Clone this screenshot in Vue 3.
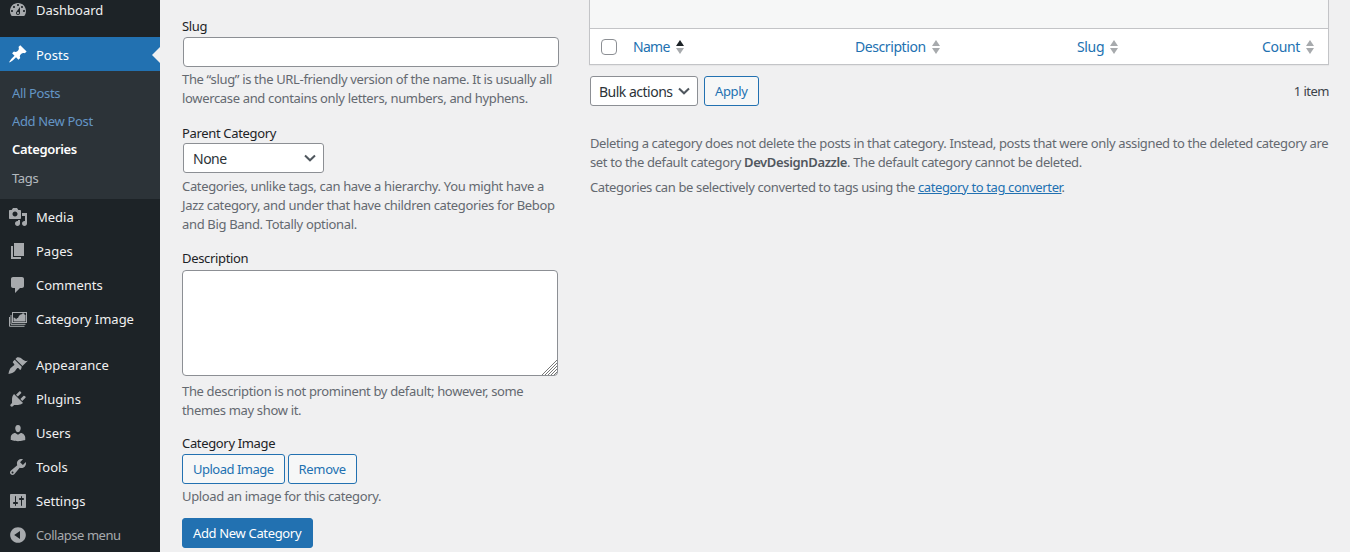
<script setup>
const ic = {
  dashboard: 'M3.76 16h12.48c1.1-1.37 1.76-3.11 1.76-5 0-4.42-3.58-8-8-8s-8 3.58-8 8c0 1.89.66 3.63 1.76 5zM10 4c.55 0 1 .45 1 1s-.45 1-1 1-1-.45-1-1 .45-1 1-1zM6 6c.55 0 1 .45 1 1s-.45 1-1 1-1-.45-1-1 .45-1 1-1zm8 0c.55 0 1 .45 1 1s-.45 1-1 1-1-.45-1-1 .45-1 1-1zm-5.37 5.55L12 7v6c0 1.1-.9 2-2 2s-2-.9-2-2c0-.57.24-1.08.63-1.45zM4 10c.55 0 1 .45 1 1s-.45 1-1 1-1-.45-1-1 .45-1 1-1zm12 0c.55 0 1 .45 1 1s-.45 1-1 1-1-.45-1-1 .45-1 1-1zm-5 3c0-.55-.45-1-1-1s-1 .45-1 1 .45 1 1 1 1-.45 1-1z',
  post: 'M10.44 3.02l1.82-1.82 6.36 6.35-1.83 1.82c-1.05-.68-2.48-.57-3.41.36l-.75.75c-.92.93-1.04 2.35-.35 3.41l-1.83 1.82-2.41-2.41-2.8 2.79c-.42.42-3.38 2.71-3.8 2.29s1.86-3.39 2.28-3.81l2.79-2.79L4.1 9.36l1.83-1.82c1.05.69 2.48.57 3.4-.36l.75-.75c.93-.92 1.05-2.35.36-3.41z',
  media: 'M13 11V4c0-.55-.45-1-1-1h-1.67L9 1H5L3.67 3H2c-.55 0-1 .45-1 1v7c0 .55.45 1 1 1h10c.55 0 1-.45 1-1zM7 4.5c1.38 0 2.5 1.12 2.5 2.5S8.38 9.5 7 9.5 4.5 8.38 4.5 7 5.62 4.5 7 4.5zM14 6h5v10.5c0 1.38-1.12 2.5-2.5 2.5S14 17.88 14 16.5s1.12-2.5 2.5-2.5c.17 0 .34.02.5.05V9h-3V6zm-4 8.05V13h2v3.5c0 1.38-1.12 2.5-2.5 2.5S7 17.88 7 16.5 8.12 14 9.5 14c.17 0 .34.02.5.05z',
  page: 'M6 15V2h10v13H6zm-1 1h8v2H3V5h2v11z',
  comments: 'M5 2h9c1.1 0 2 .9 2 2v7c0 1.1-.9 2-2 2h-2l-5 5v-5H5c-1.1 0-2-.9-2-2V4c0-1.1.9-2 2-2z',
  appearance: 'M14.48 11.06L7.41 3.99l1.5-1.5c.5-.56 2.3-.47 3.51.32 1.21.8 1.43 1.28 2.91 2.1 1.18.64 2.45 1.26 4.45.85zm-.71.71L6.7 4.77 5.05 6.42c-.39.39-.39 1.02 0 1.41l1.06 1.06c.39.39.39 1.03 0 1.42-.6.6-1.43 1.11-2.21 1.69-.35.26-.7.53-1.01.84-1.1 1.1-1.9 3.3-2.4 6.1 2.8-.5 5-1.3 6.1-2.4.31-.31.58-.66.84-1.01.58-.78 1.09-1.61 1.69-2.21.39-.39 1.03-.39 1.42 0l1.06 1.06c.39.39 1.02.39 1.41 0z',
  plugins: 'M13.11 4.36L9.87 7.6 8 5.73l3.24-3.24c.35-.34 1.05-.2 1.56.32.52.51.66 1.21.31 1.55zm-8 1.77l.91-1.12 9.01 9.01-1.19.84c-.71.71-2.63 1.16-3.82 1.16H6.14L4.9 17.26c-.59.59-1.54.59-2.12 0-.59-.58-.59-1.53 0-2.12l1.24-1.24v-3.88c0-1.13.4-3.19 1.09-3.89zm7.26 3.97l3.24-3.24c.34-.35 1.04-.21 1.55.31.52.51.66 1.21.31 1.55l-3.24 3.25z',
  users: 'M10 9.25c-2.27 0-2.73-3.44-2.73-3.44C7 4.02 7.82 2 9.97 2c2.16 0 2.98 2.02 2.71 3.81 0 0-.41 3.44-2.68 3.44zm0 2.57L12.72 10c2.39 0 4.52 2.33 4.52 4.53v2.49s-3.65 1.13-7.24 1.13c-3.65 0-7.24-1.13-7.24-1.13v-2.49c0-2.25 1.94-4.48 4.47-4.48z',
  tools: 'M16.68 9.77c-1.34 1.34-3.3 1.67-4.95.99l-5.41 6.52c-.99.99-2.59.99-3.58 0s-.99-2.59 0-3.57l6.52-5.42c-.68-1.65-.35-3.61.99-4.95 1.28-1.28 3.12-1.62 4.72-1.06l-2.89 2.89 2.82 2.82 2.86-2.87c.53 1.58.18 3.39-1.08 4.65zM3.81 16.21c.4.39 1.04.39 1.43 0 .4-.4.4-1.04 0-1.43-.39-.4-1.03-.4-1.43 0-.39.39-.39 1.03 0 1.43z',
  settings: 'M18 16V4c0-.55-.45-1-1-1H3c-.55 0-1 .45-1 1v12c0 .55.45 1 1 1h14c.55 0 1-.45 1-1zM8 11h1c.55 0 1 .45 1 1s-.45 1-1 1H8v1.5c0 .28-.22.5-.5.5s-.5-.22-.5-.5V13H6c-.55 0-1-.45-1-1s.45-1 1-1h1V5.5c0-.28.22-.5.5-.5s.5.22.5.5V11zm5-2h-1c-.55 0-1-.45-1-1s.45-1 1-1h1V5.5c0-.28.22-.5.5-.5s.5.22.5.5V7h1c.55 0 1 .45 1 1s-.45 1-1 1h-1v5.5c0 .28-.22.5-.5.5s-.5-.22-.5-.5V9z',
  collapse: 'M10 2.16c4.33 0 7.84 3.51 7.84 7.84s-3.51 7.84-7.84 7.84S2.16 14.33 2.16 10 5.71 2.16 10 2.16zm2 11.72V6.12L6.18 9.97z'
}
const group1 = [['Media', ic.media], ['Pages', ic.page], ['Comments', ic.comments]]
const group2 = [['Appearance', ic.appearance], ['Plugins', ic.plugins], ['Users', ic.users], ['Tools', ic.tools], ['Settings', ic.settings]]
const columns = [['Name', 'col-name', true], ['Description', 'col-desc', false], ['Slug', 'col-slug', false], ['Count', 'col-count', false]]
</script>

<template>
  <div class="page">
    <aside class="menu">
      <div class="item first"><svg class="icon" viewBox="0 0 20 20"><path :d="ic.dashboard" /></svg><span>Dashboard</span></div>
      <div class="item current"><svg class="icon" viewBox="0 0 20 20"><path :d="ic.post" /></svg><span>Posts</span><i class="notch"></i></div>
      <ul class="sub">
        <li class="hl">All Posts</li>
        <li class="hl">Add New Post</li>
        <li class="on">Categories</li>
        <li>Tags</li>
      </ul>
      <div v-for="g in group1" :key="g[0]" class="item"><svg class="icon" viewBox="0 0 20 20"><path :d="g[1]" /></svg><span>{{ g[0] }}</span></div>
      <div class="item">
        <svg class="icon" viewBox="0 0 20 20">
          <g class="frames"><rect x="4.5" y="3.5" width="14" height="10" /><path d="M3 6v9.3h14.5M1.5 8v9.3h15" /></g>
          <path d="M5.5 12.5V8.6c1.7 0 2.2 1.2 2.6 1.9.5-.9 1.1-1.4 1.9-1.4.7-2.3 2.4-3.9 3.5-3.9 1 0 2.2.6 4 .8v6.5z" />
          <circle cx="15.2" cy="5.6" r="1.3" />
        </svg>
        <span>Category Image</span>
      </div>
      <div class="sep"></div>
      <div v-for="g in group2" :key="g[0]" class="item"><svg class="icon" viewBox="0 0 20 20"><path :d="g[1]" /></svg><span>{{ g[0] }}</span></div>
      <div class="item collapse"><svg class="icon" viewBox="0 0 20 20"><path :d="ic.collapse" /></svg><span>Collapse menu</span></div>
    </aside>

    <main class="content">
      <section class="form">
        <p class="hint clipped">The name is how it appears on your site.</p>
        <label class="lab slug-lab">Slug</label>
        <div class="input"></div>
        <p class="hint">The “slug” is the URL-friendly version of the name. It is usually all lowercase and contains only letters, numbers, and hyphens.</p>
        <label class="lab parent-lab">Parent Category</label>
        <div class="select parent"><span>None</span><svg class="chev" viewBox="0 0 12 8"><path d="M1 1.5 6 6.3l5-4.8" /></svg></div>
        <p class="hint">Categories, unlike tags, can have a hierarchy. You might have a Jazz category, and under that have children categories for Bebop and Big Band. Totally optional.</p>
        <label class="lab desc-lab">Description</label>
        <div class="textarea">
          <svg class="grip" viewBox="0 0 15 15"><path d="M15 0 0 15M15 3 3 15M15 6 6 15M15 9l-6 6M15 12l-3 3" /></svg>
        </div>
        <p class="hint">The description is not prominent by default; however, some themes may show it.</p>
        <label class="lab img-lab">Category Image</label>
        <div class="btns">
          <button class="btn upload">Upload Image</button>
          <button class="btn">Remove</button>
        </div>
        <p class="hint up">Upload an image for this category.</p>
        <button class="primary">Add New Category</button>
      </section>

      <section class="list">
        <div class="table">
          <div class="blank"></div>
          <div class="foot">
            <span class="check"></span>
            <div v-for="c in columns" :key="c[0]" class="col" :class="c[1]">
              <a>{{ c[0] }}</a>
              <span class="sort" :class="{ asc: c[2] }"><i class="up-tri"></i><i class="down-tri"></i></span>
            </div>
          </div>
        </div>
        <div class="actions">
          <div class="select bulk"><span>Bulk actions</span><svg class="chev" viewBox="0 0 12 8"><path d="M1 1.5 6 6.3l5-4.8" /></svg></div>
          <button class="btn apply">Apply</button>
          <span class="count">1 item</span>
        </div>
        <div class="note">
          <p>Deleting a category does not delete the posts in that category. Instead, posts that were only assigned to the deleted category are set to the default category <strong>DevDesignDazzle</strong>. The default category cannot be deleted.</p>
          <p>Categories can be selectively converted to tags using the <a class="link">category to tag converter</a>.</p>
        </div>
      </section>
    </main>
  </div>
</template>

<style>
html, body { margin: 0; overflow: hidden; background: #f0f0f1; }
</style>

<style scoped>
.page {
  display: flex;
  width: 1350px;
  height: 552px;
  overflow: hidden;
  background: #f0f0f1;
  font-family: "Noto Sans", "Open Sans", sans-serif;
  font-size: 13px;
  line-height: 19px;
  color: #3c434a;
  letter-spacing: -0.34px;
}
p { margin: 0; }
.menu {
  width: 160px;
  flex: none;
  height: 552px;
  background: #1d2327;
  color: #f0f0f1;
  letter-spacing: 0;
}
.item {
  position: relative;
  display: flex;
  align-items: center;
  height: 34px;
  padding-left: 36px;
}
.item .icon {
  position: absolute;
  left: 8px;
  top: 7px;
  width: 20px;
  height: 20px;
  fill: #a7aaad;
}
.frames { fill: none; stroke: #a7aaad; stroke-width: 1; }
.first { margin-top: -7px; margin-bottom: 10px; }
.current { background: #2271b1; color: #fff; padding-top: 2px; height: 32px; }
.current .icon { fill: #fff; }
.notch {
  position: absolute;
  right: 0;
  top: 10px;
  border: 8px solid transparent;
  border-right-color: #f0f0f1;
  border-left-width: 0;
}
.sub {
  list-style: none;
  margin: 0 0 1px;
  padding: 8px 0 7px;
  background: #2c3338;
  color: rgba(240, 246, 252, 0.7);
  letter-spacing: -0.34px;
}
.sub li {
  height: 28px;
  padding-left: 12px;
  line-height: 28px;
}
.sub li:last-child { margin-top: 1px; }
.sub .hl { color: #72aee6; opacity: .8; }
.sub .on { color: #fff; font-weight: 600; }
.sep { height: 12px; }
.collapse { color: #a7aaad; letter-spacing: -0.46px; }
.content {
  flex: 1;
  display: flex;
  min-width: 0;
}
.form {
  width: 377px;
  margin-left: 22px;
  margin-top: -19px;
  flex: none;
}
.hint { color: #646970; }
.clipped { height: 19px; margin-bottom: 17px; }
.lab { display: block; color: #1d2327; }
.input {
  box-sizing: border-box;
  width: 376px;
  height: 30px;
  margin: 1px 0 3px 1px;
  background: #fff;
  border: 1px solid #8c8f94;
  border-radius: 4px;
}
.parent-lab { margin-top: 16px; }
.select {
  box-sizing: border-box;
  display: flex;
  align-items: center;
  justify-content: space-between;
  height: 30px;
  background: #fff;
  border: 1px solid #8c8f94;
  border-radius: 3px;
  color: #2c3338;
  font-size: 14px;
  letter-spacing: -0.5px;
}
.parent { width: 141px; padding: 0 7px 0 9px; margin: 0 0 4px 1px; }
.chev { width: 12px; height: 8px; fill: none; stroke: #50575e; stroke-width: 2; }
.desc-lab { margin-top: 15px; }
.textarea {
  position: relative;
  box-sizing: border-box;
  width: 376px;
  height: 106px;
  margin: 2px 0 6px;
  background: #fff;
  border: 1px solid #8c8f94;
  border-radius: 4px;
}
.grip {
  position: absolute;
  right: 0;
  bottom: 0;
  width: 15px;
  height: 15px;
  fill: none;
  stroke: #777;
  stroke-width: 1;
}
.img-lab { margin-top: 14px; }
.btns { display: flex; gap: 3px; margin: 1px 0 3px; }
.btn {
  box-sizing: border-box;
  height: 30px;
  padding: 0 10px;
  background: #f6f7f7;
  border: 1px solid #2271b1;
  border-radius: 3px;
  color: #2271b1;
  font: inherit;
  letter-spacing: inherit;
}
.upload { letter-spacing: -0.5px; }
.primary {
  display: block;
  box-sizing: border-box;
  height: 30px;
  margin-top: 12px;
  padding: 0 11px 0 10px;
  background: #2271b1;
  border: 1px solid #2271b1;
  border-radius: 3px;
  color: #fff;
  font: inherit;
  letter-spacing: inherit;
}
.list {
  width: 740px;
  margin-left: 30px;
  flex: none;
}
.table {
  box-sizing: border-box;
  border: 1px solid #c3c4c7;
  border-top: 0;
  background: #fff;
  box-shadow: 0 1px 1px rgba(0, 0, 0, .04);
}
.blank {
  height: 28px;
  background: #f6f7f7;
  border-bottom: 1px solid #c3c4c7;
}
.foot {
  position: relative;
  display: flex;
  align-items: center;
  height: 35px;
  font-size: 14px;
}
.check {
  box-sizing: border-box;
  width: 16px;
  height: 16px;
  margin-left: 11px;
  background: #fff;
  border: 1px solid #8c8f94;
  border-radius: 4px;
  flex: none;
}
.col { display: flex; align-items: center; gap: 6px; color: #2271b1; }
.col-name { width: 222px; margin-left: 16px; letter-spacing: -0.7px; }
.col-desc { width: 222px; letter-spacing: -0.42px; }
.col-slug { width: 184px; }
.col-count { flex: 1; justify-content: flex-end; padding-right: 14px; }
.sort { display: flex; flex-direction: column; gap: 2px; }
.sort i {
  display: block;
  width: 0;
  height: 0;
  border-left: 4.5px solid transparent;
  border-right: 4.5px solid transparent;
}
.up-tri { border-bottom: 6px solid #a7aaad; }
.down-tri { border-top: 6px solid #a7aaad; }
.asc .up-tri { border-bottom-color: #1d2327; }
.actions {
  display: flex;
  align-items: center;
  margin: 11px 0 0 1px;
  height: 30px;
}
.bulk { width: 108px; padding: 0 7px 0 8px; }
.apply { margin-left: 6px; }
.count { margin-left: auto; letter-spacing: -0.5px; }
.note { margin: 28px 0 0 1px; }
.note p { margin-bottom: 6px; color: #646970; letter-spacing: -0.37px; }
.note strong { font-weight: 600; color: #50575e; }
.link { color: #2271b1; text-decoration: underline; }
</style>
